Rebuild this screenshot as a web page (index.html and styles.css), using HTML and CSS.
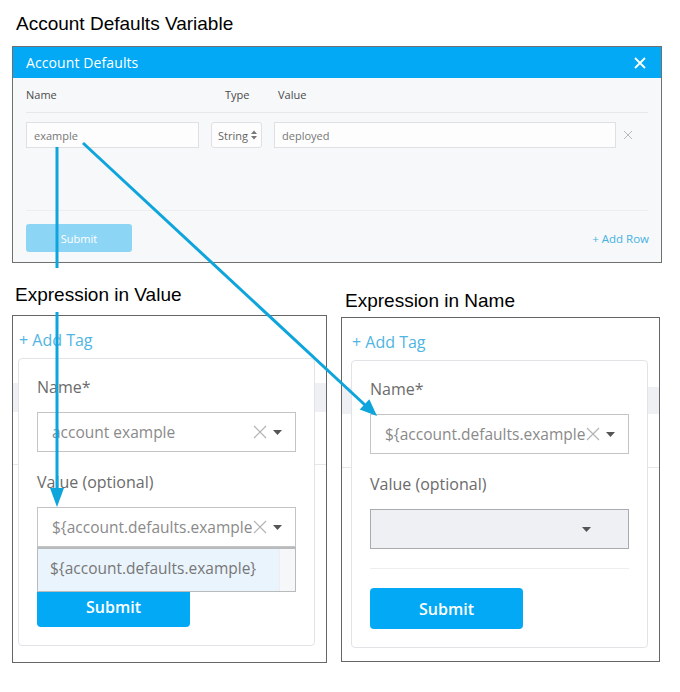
FILE: index.html
```html
<!DOCTYPE html>
<html lang="en">
<head>
<meta charset="utf-8">
<title>Account Defaults Variable</title>
<link rel="stylesheet" href="styles.css">
</head>
<body>
<div class="page">
  <h1 class="caption caption-title">Account Defaults Variable</h1>

  <section class="dialog">
    <header class="dialog-head">
      <span class="dialog-title">Account Defaults</span>
      <svg class="close" width="12" height="12" viewBox="0 0 12 12"><path d="M1 1L11 11M11 1L1 11" stroke="#fff" stroke-width="1.8" fill="none"/></svg>
    </header>
    <div class="dialog-body">
      <div class="cols">
        <span class="c-name">Name</span>
        <span class="c-type">Type</span>
        <span class="c-value">Value</span>
      </div>
      <div class="var-row">
        <div class="field f-name">example</div>
        <div class="field f-type">String
          <svg width="6" height="10" viewBox="0 0 6 10"><path d="M0 4L3 0.5L6 4Z M0 6L3 9.5L6 6Z" fill="#777"/></svg>
        </div>
        <div class="field f-value">deployed</div>
        <svg class="row-x" width="10" height="10" viewBox="0 0 10 10"><path d="M1 1L9 9M9 1L1 9" stroke="#b9b9b9" stroke-width="1" fill="none"/></svg>
      </div>
      <div class="dialog-foot">
        <button class="btn-light">Submit</button>
        <span class="add-row">+ Add Row</span>
      </div>
    </div>
  </section>

  <div class="examples">
    <div class="example ex-left">
      <h2 class="caption cap-left">Expression in Value</h2>
      <div class="tag-panel panel-left">
        <div class="add-tag">+ Add Tag</div>
        <div class="card">
          <div class="lbl">Name*</div>
          <div class="select">
            <span class="sel-text">account example</span>
            <svg class="sel-x" width="14" height="14" viewBox="0 0 14 14"><path d="M1 1L13 13M13 1L1 13" stroke="#b4b4b4" stroke-width="1.2" fill="none"/></svg>
            <svg class="caret" width="9" height="5" viewBox="0 0 9 5"><path d="M0 0H9L4.5 5Z" fill="#555"/></svg>
          </div>
          <div class="lbl lbl-value">Value (optional)</div>
          <div class="select-wrap">
            <div class="select">
              <span class="sel-text">${account.defaults.example}</span>
              <svg class="sel-x" width="14" height="14" viewBox="0 0 14 14"><path d="M1 1L13 13M13 1L1 13" stroke="#b4b4b4" stroke-width="1.2" fill="none"/></svg>
              <svg class="caret" width="9" height="5" viewBox="0 0 9 5"><path d="M0 0H9L4.5 5Z" fill="#555"/></svg>
            </div>
            <div class="menu">
              <div class="menu-item">${account.defaults.example}</div>
              <div class="menu-scroll"></div>
            </div>
          </div>
          <div class="divider"></div>
          <button class="btn">Submit</button>
        </div>
      </div>
    </div>

    <div class="example ex-right">
      <h2 class="caption cap-right">Expression in Name</h2>
      <div class="tag-panel panel-right">
        <div class="add-tag">+ Add Tag</div>
        <div class="card">
          <div class="lbl">Name*</div>
          <div class="select">
            <span class="sel-text">${account.defaults.example}</span>
            <svg class="sel-x" width="14" height="14" viewBox="0 0 14 14"><path d="M1 1L13 13M13 1L1 13" stroke="#b4b4b4" stroke-width="1.2" fill="none"/></svg>
            <svg class="caret" width="9" height="5" viewBox="0 0 9 5"><path d="M0 0H9L4.5 5Z" fill="#555"/></svg>
          </div>
          <div class="lbl lbl-value">Value (optional)</div>
          <div class="select select-empty">
            <svg class="caret" width="9" height="5" viewBox="0 0 9 5"><path d="M0 0H9L4.5 5Z" fill="#555"/></svg>
          </div>
          <div class="divider"></div>
          <button class="btn">Submit</button>
        </div>
      </div>
    </div>
  </div>

  <svg class="arrows" width="680" height="692" viewBox="0 0 680 692">
    <g stroke="#0ea4dc" stroke-width="3" fill="none" stroke-linecap="butt">
      <path d="M57 147V268"/>
      <path d="M57 312V492"/>
      <path d="M83 143L365 405"/>
    </g>
    <g fill="#0ea4dc">
      <path d="M50 488H64L57 507Z"/>
      <path d="M377 416L359.7 409.5L369.3 399.3Z"/>
    </g>
  </svg>
</div>
</body>
</html>
```
FILE: styles.css
```css
* {
  box-sizing: border-box;
  margin: 0;
  padding: 0;
}

body {
  margin: 0;
  background: #fff;
  font-family: "Open Sans", "Noto Sans", sans-serif;
}

.page {
  position: relative;
  width: 680px;
  height: 692px;
  overflow: hidden;
  padding-top: 13px;
}

.caption {
  font: 19px/22px "Liberation Sans", Arial, sans-serif;
  font-weight: normal;
  color: #000;
}

.caption-title {
  margin: 0 0 11px 16px;
}

/* ---------- Account Defaults dialog ---------- */
.dialog {
  margin-left: 12px;
  width: 650px;
  height: 217px;
  border: 1px solid #707070;
  background: #f7f8fa;
  display: flex;
  flex-direction: column;
}

.dialog-head {
  height: 31px;
  flex: none;
  background: #03a9f4;
  color: #fff;
  display: flex;
  align-items: center;
  justify-content: space-between;
  padding: 0 15px 0 13px;
  font-size: 14px;
}

.dialog-title {
  font-weight: 400;
  letter-spacing: 0.1px;
}

.dialog-body {
  flex: 1;
  padding: 10px 13px 0;
}

.cols {
  display: flex;
  font-size: 11px;
  line-height: 14px;
  color: #4a4a4a;
  padding-bottom: 10px;
  border-bottom: 1px solid #e7e8eb;
}

.c-name { width: 199px; }
.c-type { width: 53px; }

.var-row {
  display: flex;
  align-items: center;
  margin-top: 9px;
  height: 26px;
}

.field {
  height: 26px;
  border: 1px solid #dfe0e3;
  background: #fdfdfd;
  font-size: 11px;
  color: #777;
  display: flex;
  align-items: center;
  padding-left: 7px;
}

.f-name { width: 173px; }

.f-type {
  width: 51px;
  margin-left: 12px;
  border-radius: 3px;
  padding-left: 6px;
  gap: 3px;
  color: #666;
}

.f-value {
  width: 342px;
  margin-left: 12px;
}

.row-x {
  margin-left: 7px;
}

.dialog-foot {
  margin-top: 62px;
  border-top: 1px solid #eceef0;
  padding-top: 13px;
  display: flex;
  justify-content: space-between;
  align-items: center;
}

.btn-light {
  width: 106px;
  height: 28px;
  border: 0;
  border-radius: 3px;
  background: #8dd5f5;
  color: #fff;
  font: 11px "Open Sans", sans-serif;
}

.add-row {
  font-size: 11.5px;
  color: #45b1e0;
  margin-right: -1px;
}

/* ---------- Examples ---------- */
.examples {
  display: flex;
  margin-top: 21px;
}

.ex-left {
  margin-left: 12px;
  width: 315px;
}

.ex-right {
  margin-left: 14px;
  width: 319px;
}

.cap-left {
  padding-left: 3px;
  margin-bottom: 9px;
}

.cap-right {
  margin-top: 6px;
  padding-left: 4px;
  margin-bottom: 5px;
}

.tag-panel {
  border: 1px solid #666;
  padding-top: 14px;
}

.panel-left {
  height: 348px;
  padding-left: 5px;
  background:
    linear-gradient(#eef0f3, #eef0f3) 0 67px / 100% 29px no-repeat,
    linear-gradient(#e6e7e9, #e6e7e9) 0 148px / 100% 1px no-repeat,
    #fff;
}

.panel-right {
  height: 345px;
  padding-left: 9px;
  background:
    linear-gradient(#eef0f3, #eef0f3) 0 69px / 100% 27px no-repeat,
    linear-gradient(#e6e7e9, #e6e7e9) 0 149px / 100% 1px no-repeat,
    #fff;
}

.add-tag {
  font-size: 16px;
  line-height: 20px;
  color: #4fb5e2;
  padding-left: 1px;
}

.card {
  margin-top: 8px;
  width: 297px;
  border: 1px solid #e2e3e6;
  border-radius: 4px;
  background: #fff;
  padding: 18px 18px 18px;
}

.lbl {
  font-size: 16px;
  line-height: 20px;
  color: #6b6b6b;
}

.lbl-value {
  margin-top: 20px;
}

.select {
  margin-top: 15px;
  height: 40px;
  border: 1px solid #c3c4c6;
  background: #fff;
  display: flex;
  align-items: center;
  padding-left: 14px;
  padding-right: 13px;
}

.sel-text {
  flex: 1;
  min-width: 0;
  overflow: hidden;
  white-space: nowrap;
  font-size: 15.5px;
  color: #8a8a8a;
}

.sel-x {
  flex: none;
  margin-left: 1px;
}

.caret {
  flex: none;
  margin-left: 6px;
}

.select-empty {
  background: #eef0f3;
  border-color: #a9abae;
  justify-content: flex-end;
  padding-right: 37px;
}

.select-wrap {
  position: relative;
}

.menu {
  position: absolute;
  left: 0;
  right: 0;
  top: 100%;
  height: 45px;
  border: 1px solid #b9babc;
  border-top: 2px solid #b9babc;
  display: flex;
  z-index: 2;
  background: #fff;
}

.menu-item {
  flex: 1;
  background: #eaf4fd;
  font-size: 15.5px;
  color: #777;
  display: flex;
  align-items: center;
  padding-left: 12px;
  padding-bottom: 5px;
  white-space: nowrap;
}

.menu-scroll {
  width: 16px;
  background: #f6f7f8;
  border-left: 1px solid #eceef0;
}

.divider {
  margin-top: 19px;
  border-top: 1px solid #eceef0;
}

.btn {
  display: block;
  margin-top: 19px;
  width: 153px;
  height: 41px;
  border: 0;
  border-radius: 4px;
  background: #03a9f4;
  color: #fff;
  font: 600 16px "Open Sans", sans-serif;
}

.arrows {
  position: absolute;
  left: 0;
  top: 0;
  z-index: 10;
  pointer-events: none;
}
```
